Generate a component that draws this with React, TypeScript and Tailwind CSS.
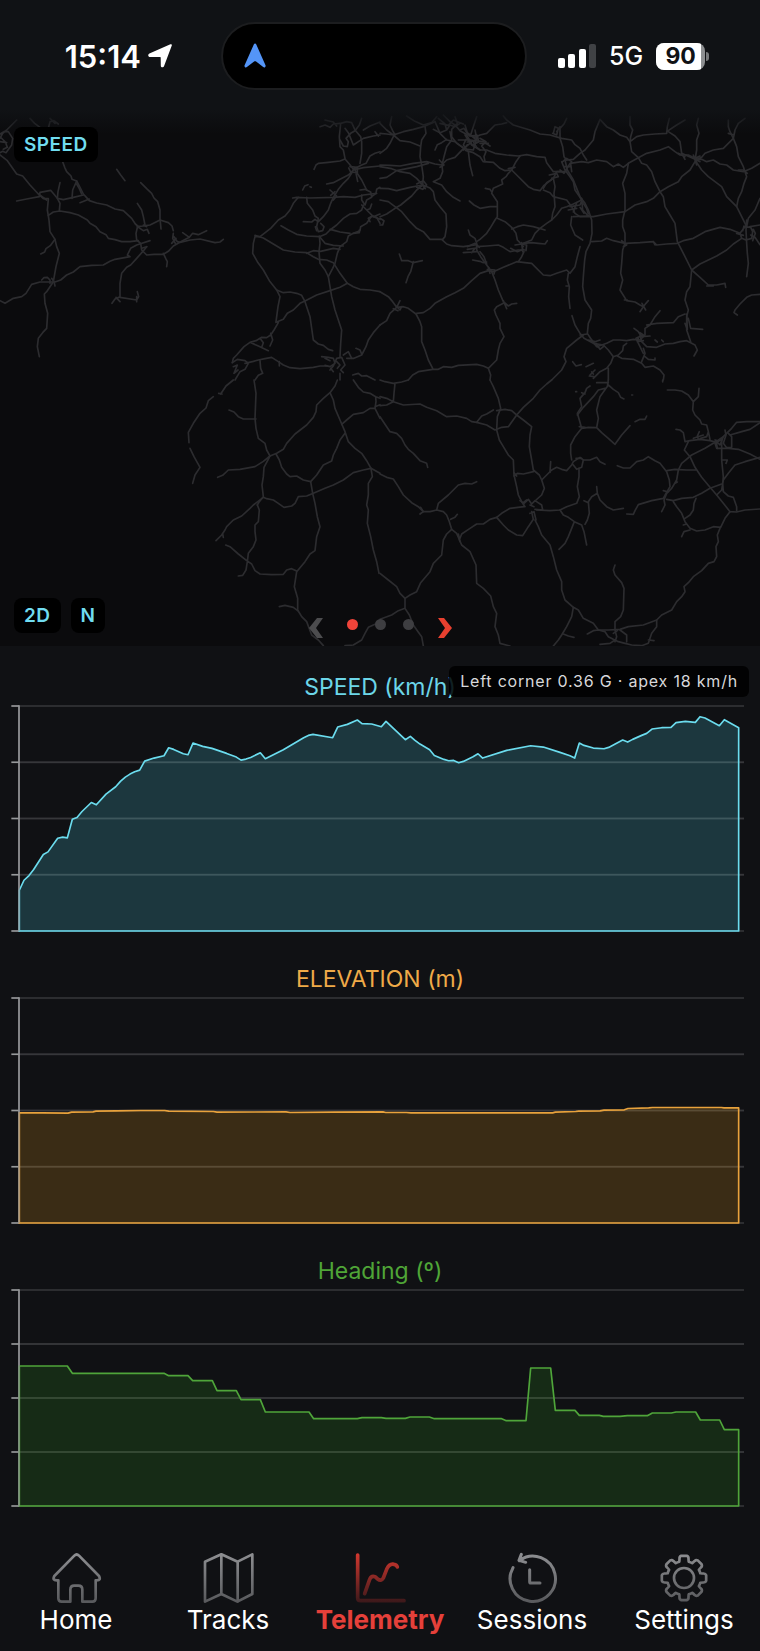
import type { ReactNode } from 'react';

const ROADS_NORTH_WEST = [
  'M0 135 22 152 50 192 68 198 90 225 115 252 140 270',
  'M50 30 38 42 20 60 8 70 0 85M0 72 14 64 25 65 38 85 35 105 18 128 8 124 0 128M0 95 20 98M4 84 16 96 22 112 10 118',
  'M90 25 104 40 120 52M150 25 165 40M145 55 150 35 162 32 175 42',
  'M188 155 194 172 200 185 213 198 216 208 230 213 240 232 250 252 268 272 290 279 320 285 345 297 370 302 395 325 406 342 413 348',
  'M50 273 80 267 118 260 120 247 152 241 172 265 190 269 220 262 250 255',
  'M180 218 174 245 172 265 180 280 178 302M230 213 218 240 216 265M230 222 238 236 245 252M240 278 268 267M118 255 130 266 145 266',
  'M145 268 142 300 147 330 150 365 165 388 170 410 178 430 168 470 160 515 140 545 133 552 135 580 143 610 140 655 128 668 115 685 112 710 118 740',
  'M145 316 160 306 180 303 210 308 235 315 262 330 270 340 288 350 300 365 318 374 325 385 345 389 365 395 390 395 415 392',
  'M122 432 134 426 138 416 152 406 165 388',
  'M0 572 15 580 25 574 40 565 65 560 78 550 95 523 120 516 165 516 182 510 200 495 220 486 240 470 275 466 310 465 330 454 345 448 390 440 382 435 392 415 410 405 450 392',
  'M125 510 132 503 142 502 150 510 150 520M155 505 162 515 165 528',
  'M422 218 440 236 455 250 462 264 473 275 480 300 480 325 483 357',
  'M412 280 425 300 430 320 435 345M350 178 362 195 375 212',
  'M413 348 408 370 410 390 422 400 425 420 440 435 462 433 490 433 505 424 520 408 545 394 568 382 578 370 595 374 620 362',
  'M413 350 450 345 480 330 505 338 516 348 520 362M412 350 430 362 442 358 447 370M430 345 440 350M425 415 440 410',
  'M520 370 518 385 526 400M522 380 532 395 540 397 570 390 600 387 645 398 660 396 670 388M548 368 568 382M528 385 515 400',
  'M490 430 497 445 502 455 500 470M440 410 428 425 410 445 392 465 380 472 365 490 360 520 360 562 410 570 416 560 412 545M410 575 410 560M360 560 345 567 336 580M348 562 360 575',
  'M878 264 890 262 930 264 1000 262 1030 260 1065 262 1090 255 1130 250M908 240 914 228 924 224M930 230 934 232',
  'M895 262 880 280 870 300 855 318 835 330 812 355 780 380 765 380 760 400 758 430 772 455 790 480 808 512 830 540 840 560 834 590 828 635 835 638 822 660 812 675',
  'M765 376 790 384 820 402 850 420 885 426 920 428 940 440 955 448 980 450 1000 458 1020 490 1042 520 1060 530 1080 538 1110 540 1140 545',
  'M830 540 850 548 870 546 890 550 905 556 915 575 930 620 940 690 955 702 970 706 985 718 998 722',
  'M828 637 850 628 862 610 880 600 900 580 915 573 950 555 990 542 1020 532 1042 520',
  'M920 262 922 280 938 300 945 318 955 325M910 335 935 336 945 328 950 332M955 325 950 350 955 365 968 362 972 350 962 340',
  'M843 347 865 360 890 373 920 378 958 380 978 372 990 360 1010 345 1030 325 1050 312 1070 310 1085 300 1090 285',
  'M958 378 960 400 957 425 960 460 975 480 985 500 990 530 995 560 1005 600 1015 630 1025 660 1022 700 1020 740',
  'M985 500 998 475 1005 460 1012 430 1020 410 1040 395 1045 378 1060 370 1080 362 1082 350 1100 340 1115 318 1140 328',
  'M920 430 940 422 962 424 1000 415 1020 418M960 382 975 400 1000 406 1030 408M1050 370 1020 366 1005 362 990 358',
  'M1058 185 1045 205 1030 220 1015 238 1000 262 992 280 985 300 970 320 955 335M980 222 1000 218 1020 208 1045 195 1060 180',
  'M942 178 948 165 955 160 985 157 1020 153 1035 147 1048 162 1060 178 1085 165 1098 160 1110 138 1125 130 1140 125M1060 180 1090 173 1140 168M1065 180 1085 210 1100 240',
  'M1035 145 1030 120 1020 110 1018 80 1022 40 1040 35 1055 38 1065 60 1082 80 1085 95 1085 130 1080 160',
  'M1020 90 1030 108 1042 110 1045 95 1038 85 1052 70 1065 62 1078 45 1085 25M1035 55 1045 68 1060 105 1090 85 1120 78 1140 75M960 50 975 45 990 52 1000 42 1020 40M975 30 1000 36 1010 48M1090 60 1110 48 1140 36M1125 65 1135 78',
  'M1050 170 1072 172 1072 188 1052 186 1046 174M1080 240 1095 238 1112 246 1115 262 1100 270 1095 285 1085 270 1085 255M1085 285 1100 300 1110 296 1115 282M1115 260 1128 250 1130 238 1140 232M1100 300 1120 320 1140 312M1068 190 1073 214',
  'M1110 335 1105 325 1118 318 1130 322 1140 340M1060 370 1078 368 1078 360M990 240 1010 258 1000 270M1005 245 992 256M950 362 946 350',
  'M812 675 800 683 785 682 768 692 750 697 732 710 710 735 700 745 697 758M750 697 775 708 805 722M780 685 790 698 785 712M812 670 818 690 810 708',
  'M697 758 712 748 735 752 745 760 735 778 720 785 705 810M700 770 712 765 702 790 714 780M735 760 760 754 775 750 795 746 815 742 835 755 850 765 870 773 900 776 940 772 960 768 980 768',
  'M780 752 782 775 788 790 775 796 765 810M838 755 838 768M1140 645 1120 668 1105 690 1098 710 1085 735 1062 745 1040 745M1068 715 1080 720 1085 732',
  'M965 740 985 742 1000 745 1005 760 990 770 975 766M990 780 1000 768 1010 745 1025 742 1035 765 1022 780 1030 788M1030 735 1045 725 1055 745M1000 785 992 775M1020 790 1020 810M1010 755 1020 765 1012 775M1058 795 1075 790 1085 798 1100 797 1125 810M975 745 990 752',
];

const ROADS_NORTH_EAST = [
  'M0 40 20 60 40 75 70 65 100 58 130 50 165 35M0 70 20 72 40 75 60 92 90 96 120 108M0 130 20 115 30 100 40 80M35 20 30 45 38 62 45 75',
  'M80 18 105 34 130 45 155 38 170 20M135 50 138 70 125 90 122 110 120 140 125 165 130 200 128 225',
  'M0 165 30 166 60 168 100 160 140 155 165 162 185 165 200 150 225 142 248 118 270 100M0 205 20 202 50 182 80 176 110 170 145 160M0 170 35 176 60 185 90 190 110 205 128 225M0 235 25 236 50 242 90 232 128 225 110 240 95 258 80 270 62 285 45 295 20 312 0 320',
  'M0 270 25 275 45 290 65 305 90 335 110 355 130 365 150 388 185 388 200 402 215 407 250 410 290 404M0 325 12 332 8 345 0 345',
  'M128 225 150 234 160 245 165 270 180 290 198 312 200 350 195 380 188 388M110 222 130 212 140 225 128 238 110 232M120 216 136 236',
  'M160 215 180 205 188 185 186 165 192 140 200 110 215 90 210 65M160 215 185 225 200 245 220 262 240 273M178 150 192 165 180 172',
  'M165 35 180 70 200 90 225 95 245 110 258 122 280 128 300 140 310 155 340 157 360 175 375 182 395 180',
  'M165 120 172 104 185 98 200 88M160 58 180 68 200 60 210 45 225 50 240 40M180 40 205 46 220 30 250 42M190 15 210 35 225 45 240 62 258 72 275 100M175 25 195 42 200 60M225 20 232 40 215 58 215 80 230 100 248 112',
  'M240 60 252 55 265 75 285 82 300 75 320 70 345 45 365 42 380 38M290 20 280 50 272 75M255 45 262 68 290 90M258 88 250 105 265 125 270 165 278 197M235 90 270 90 310 95 330 108M280 95 290 112 300 120 320 120 345 130 380 135 415 138 440 134 470 140 495 142 500 158 520 185 545 185',
  'M300 85 318 95 305 108 318 125 312 140 315 155M285 60 290 85 280 120 262 118M255 75 275 105 300 120M268 78 292 76 296 96 278 104M262 96 285 92M300 100 325 100M250 120 262 104',
  'M370 18 380 30 400 45 450 60 480 72 510 75 545 85 575 90 585 104 600 115 610 135 620 150M420 138 408 155 395 180 385 190 378 200 365 210 368 222 340 235 335 250 352 275 352 300 352 320 345 330 330 355 320 370 300 388 290 395',
  'M316 235 330 238 335 245M268 273 282 285 300 295 330 290 352 290M395 180 410 195 430 215 445 230 460 238 480 242 492 226 520 205M385 176 405 172',
  'M352 325 375 335 395 352 408 370 412 390 422 400 430 410M395 357 412 350 430 345 460 350 495 360',
  'M265 360 270 375 285 385 290 400 290 420 302 440 320 465 335 485 345 510 355 540 370 575M370 575 385 588 395 582 410 580M370 572 380 596M370 580 350 590 343 600 348 615 360 640 360 655 372 680 360 700 355 720 350 750 325 775 332 795 330 810',
  'M290 410 320 408 355 405 370 412 390 425 415 420 435 420M430 400 455 390 465 370 480 355 500 340 515 330 530 315 545 295 560 290 580 282 605 270',
  'M250 428 290 425M262 410 285 400 298 412M262 418 290 414M430 400 455 398 475 400 495 402 502 392M405 405 425 402 440 405 438 422M392 415 412 425 430 418M425 398 428 425M432 425 425 440 415 455M275 428 285 415',
  'M110 610 130 608 150 595 165 580 200 560 225 548 250 535 275 512 300 490 325 482 340 485 370 472 410 455 435 458 455 460 470 475 490 495 510 497 530 490 560 480 570 490 585 470 592 440 600 410',
  'M565 490 562 510 568 530 566 560 570 595M558 528 566 528M278 450 300 454 310 458 320 456M322 478 345 480 342 492M326 472 330 490M300 425 312 440 320 462',
  'M58 432 65 452 85 452 100 458 127 452M100 455 92 485 84 500 78 518M0 545 25 560 38 575 50 592 70 590 85 595 108 612 120 635 125 650 125 695 135 720 145 750 158 775M0 645 20 632 30 610 50 592 60 572M45 585 60 600 65 590M40 596 54 602',
  'M85 810 98 795 115 785 158 778 175 778 190 770 215 772 235 766 290 763 310 768 325 775',
  'M560 25 552 42 540 55 540 85 548 110 552 140 560 150M520 70 525 50 535 55 530 75 518 70M540 50 530 65',
  'M555 150 562 180 580 210 590 235 600 260 615 280 625 300 635 330 636 370 630 400 618 425 614 450 610 500 608 530 615 570 635 600 632 625 625 640 622 670 635 690',
  'M545 155 555 180 570 200 580 215 585 240 600 262 610 280 620 296 625 312M572 160 575 185M548 155 560 145 575 155 570 170 552 170M540 180 552 190 560 178M508 195 530 190 535 200 515 205',
  'M490 235 500 218 520 205 530 185 555 185 570 160 605 155 625 158 650 150 680 155 700 170 715 162 730 172 745 160 775 143 800 130 840 120 865 110 885 125 900 135 925 135 945 145',
  'M520 205 525 230 522 250 525 290 518 310 515 330M490 240 510 248 520 260 560 270 575 290 585 310 600 320 640 320 680 312 735 305 765 285 800 275 820 265 840 245 865 230 895 215 905 200 930 180 945 155',
  'M570 290 600 285 606 270M565 300 590 295M580 320 630 318M575 320 572 345 585 375 608 390M605 265 608 300 625 318M590 278 580 306M600 292 612 310',
  'M560 150 580 148 600 130 615 120 640 90 645 65 660 28 680 50 700 60 720 75 740 82 750 95 755 125 775 143 785 160 800 165 815 185 825 215 840 245 850 260 855 290 870 315 885 340 892 395 910 430 935 480 930 530 920 545 915 570 925 600 920 620 920 660 932 695',
  'M750 20 750 45 758 60 752 80 750 95 770 80 790 75 825 72 860 70 862 50 868 25M860 65 890 45 915 30M865 65 885 78 900 95 905 130 915 148M895 130 915 140',
  'M745 160 740 190 728 220 735 250 735 300 728 330 728 350 735 370 735 400 728 420 725 460 722 490 728 510 720 540 740 572 765 576 780 585 790 590 798 580 805 572M790 590 780 605M786 580 797 600M733 570 742 570',
  'M635 395 665 393 680 385 700 392 735 400 780 398 820 395 830 405 860 402 892 400 910 392 940 385 975 365 1020 352 1050 358 1080 370M820 395 825 405M725 392 740 405 730 410',
  'M955 25 950 45 957 70 950 90 950 120 945 150 965 180 985 200 1025 230 1040 260 1070 290 1085 320 1100 350M905 130 945 148 965 148 980 155 1000 150 1020 162 1040 165 1060 180 1090 185 1115 175 1140 160M945 150 965 142 975 130 1000 120 1030 115 1045 100 1060 85 1050 65 1045 50 1045 30M930 140 960 155M940 135 950 165M945 145 960 138',
  'M1095 25 1075 40 1065 60 1060 85 1070 110 1075 140 1090 170 1100 200 1092 220 1085 245 1075 265 1070 290M1045 70 1062 75 1065 62M1075 180 1090 180 1102 190',
  'M1100 350 1105 325 1125 300 1140 265M1080 370 1085 385 1098 390 1115 385 1118 365 1112 352 1095 350 1080 370M1100 330 1098 360 1100 400 1102 430 1105 460 1100 500M1110 350 1140 345M1112 375 1125 382 1140 404M1120 358 1126 370 1118 392M1070 370 1090 376M1092 348 1088 362',
  'M1085 385 1060 402 1040 420 1010 438 985 450 960 462 935 480 960 502 985 525 1010 525 1035 520 1037 532M980 528 1000 528M1140 553 1115 555 1100 562 1080 582 1065 600 1062 608 1072 615',
  'M576 617 585 645 600 670 612 685 640 700 670 705 685 720 700 740M610 675 590 690 560 715 552 740 558 755 545 780 530 795 515 810M600 675 622 672M625 690 645 695 660 690',
  'M635 690 650 710 680 700 700 690 720 690 740 692 760 688 780 690 795 675 795 655 810 645 825 620 840 602M800 645 830 640 880 638 895 620 915 612M915 640 922 658 920 612M925 625 932 655 968 658',
  'M762 655 775 665 785 680 810 678M768 685 790 675 780 668M780 675 785 695 800 710 830 712 855 702 880 700 900 695 920 692 932 698 945 705 952 720 942 738M770 690 780 710 790 730M775 684 772 695 790 692',
  'M700 740 715 735 728 722 730 708 740 700M712 738 725 745 760 748 785 760 795 772 820 768 840 780 852 795 850 810M790 715 795 730 785 755M795 740 805 748 825 750 825 744M700 740 692 760 680 775 660 785 640 805M685 775 685 810',
  'M578 755 588 768 604 764M618 770 640 760M630 795 645 780M648 700 660 718 672 708M640 698 655 712M825 690 832 696M845 690 850 695M628 798 642 800M635 786 640 792',
];

const ROADS_SOUTH_WEST = [
  'M700 0 678 18 662 42M656 40 666 42M640 50 625 62 618 84 600 100 580 130 565 157 567 188M570 205 582 230 600 262 585 285 578 310',
  'M762 0 768 40 765 115 768 145 775 175 795 190 800 210 810 228 792 262 790 290 786 315 790 350 778 365 772 375',
  'M687 90 702 96 715 110 730 117 768 117M653 292 668 286 685 270 720 268 765 260 790 244 810 228 830 220 850 208 860 190 885 162 920 135 940 112 948 95 950 75 970 55 990 38 1005 18 1012 0',
  'M990 38 1000 60 1005 85 1020 120 1035 155 1045 185 1065 205 1085 220 1100 242 1113 265 1140 280',
  'M828 222 838 240 845 262 860 282 870 290 890 288 910 300 932 305 950 285 970 255 995 243 1000 225 1010 205 1020 180 1035 160',
  'M1025 133 1040 120 1060 103 1090 98 1110 85 1125 85 1128 65 1127 50 1110 40 1090 36 1075 22 1060 0M1125 85 1140 115M1127 50 1140 55M1125 80 1140 74',
  'M932 305 938 340 945 370 952 410 960 440 950 470 945 512 930 522 915 545 890 575 883 620 893 655 893 690 905 710 920 725 935 765 955 780 970 797',
  'M1113 265 1090 270 1060 278 1030 300 1000 315 975 325 940 340 920 348 895 350 885 370 875 378 852 382 835 370 820 360 800 356 790 352 760 375 750 385 725 408 700 420 680 440 675 450 665 465 648 482M670 472 668 462',
  'M772 375 778 390 775 425 765 435 765 455 768 480 760 500 745 520 742 545 738 570 728 586 715 588M677 495 690 500 715 522 740 542 755 552 765 572 780 582 815 584 850 583 860 570 875 566 890 573',
  'M1113 265 1117 290 1105 310 1105 345 1100 375 1105 390 1102 430 1112 470 1120 510 1130 545 1137 580M838 680 855 676 880 682 893 692M1140 730 1125 733 1105 742 1095 760 1085 780 1060 795 1035 797',
];

const ROADS_SOUTH_EAST = [
  'M0 0 15 5 40 10 65 6 85 0M45 10 42 40 40 65 20 75 0 77M0 50 20 55 40 65 70 75 120 72 140 82 170 92 200 110 230 108 260 115 275 125 290 127 320 135 345 150 365 142 385 140 410 105 395 92 375 88 350 92',
  'M290 127 305 108 320 102 340 90M330 0 340 20 355 55 362 85 352 110 350 150 358 180 370 200 385 225 400 240 402 285 410 320 415 345 425 365 435 380',
  'M410 105 430 82 460 55 480 30 500 12 515 0M410 105 430 120 455 140 450 165 448 200 455 240 460 270 478 285 485 300 493 325 485 345 468 360M402 288 412 280 430 282 460 275M402 278 410 288',
  'M0 110 20 140 30 155 50 160 65 175 75 195 85 208 100 220 120 242 140 250 143 262M0 282 20 292 40 297 55 320 70 345 95 368 115 380 130 395 150 395 170 390 190 395 200 405 208 425 215 448',
  'M170 390 175 370 205 345 235 315 255 310 275 312 290 305M212 418 225 412 232 403M130 395 120 402M122 382 130 395',
  'M0 580 25 600 50 620 60 640 75 655 90 645 110 635 122 608 150 575 160 550 185 525 190 480 200 462 215 448 230 460 245 495 270 515 288 555 290 610 310 625 332 648 340 680 350 700 345 740 355 765 360 790 390 798',
  'M75 655 75 685 55 692 35 705 0 718M75 685 88 705 100 735 112 752 125 770 130 798M235 462 240 485M238 480 245 462 270 445 290 432 310 432 330 418 350 412 365 400 390 385 432 380',
  'M350 412 370 435 385 450 410 465 428 467 445 440 460 418 455 395M420 362 432 370 445 358 455 372 465 362 485 375 488 390 465 388M450 375 462 380M450 400 462 395 468 420M430 368 440 360',
  'M470 390 510 392 540 390 560 380 590 370 598 350 592 320 597 290 597 265M465 420 475 440 485 465 510 495 520 530 530 570 545 605 545 630 555 660 580 682 575 710 560 740 545 765 535 780 520 798M550 762 565 768 582 772',
  'M540 390 550 405 565 412 583 425 605 435 612 455 620 495M583 425 575 445 565 470 555 490 537 508M485 300 500 285 515 270 530 262 545 268 560 272 575 255 580 245 600 232 610 240 605 262 590 268 580 255',
  'M575 240 572 220 572 195 585 170 605 145 598 120 592 100 605 80 600 55 615 38 620 25 630 18M510 277 512 245M610 240 630 240 650 232 660 245 675 253M588 235 605 235M598 140 615 142',
  'M605 145 625 142 650 143 665 158 685 175 705 193 725 165 750 137M765 125 780 118 795 118 800 108M650 143 655 115 650 90 660 50 685 15 700 28 715 38 722 52 732 57M592 105 610 82 640 50 655 30 675 25M650 8 685 8M685 0 682 20M605 38 615 42',
  'M712 257 730 264 750 264 770 245 790 240 805 230 825 242 840 250 860 275 868 300 870 320 858 340 850 355 815 362 775 374 765 392 760 403 740 402M755 45 758 45M848 0 848 6M587 35 590 35',
  'M862 30 885 30 905 33 925 45 940 65 955 50 957 25M940 65 938 90 945 105 960 120 965 132 980 135 985 155 990 178M888 148 900 150 910 158 915 185 930 182 960 178 990 182 1010 187M958 155 952 168 955 178M985 155 980 170 960 176M940 175 970 165',
  'M925 185 913 210 930 230 945 262 965 292 990 322 1010 345 1030 370 1050 395 1070 396 1095 390 1140 387M860 272 885 268 920 270 950 270',
  'M1140 125 1100 125 1070 127 1055 145 1030 170 1000 190 975 205 935 225 905 250 895 270 890 300 875 325 860 340 852 360 855 375 845 395M860 358 880 362 905 355 940 352 965 340 990 325 1025 312M850 332 865 336M885 310 892 306',
  'M1025 175 1025 240 1030 290 1028 310 1030 335 1045 348 1060 352 1070 380 1070 393M1010 345 1025 330 1030 300 1045 280 1065 255 1095 245 1140 232M1140 238 1110 222 1075 208 1045 205 1010 205 1005 190 1025 178',
  'M1050 165 1085 155 1110 148 1140 128M1035 150 1038 165 1030 190 1040 203 1055 202 1055 170 1045 160M1025 240 1042 240 1038 250M1005 180 1020 195 1030 170M1012 205 1008 180',
  'M880 365 890 380 905 400 915 425 930 445 950 453 975 450 1000 440 1022 442 1035 415 1050 395M915 415 930 405 940 390 942 370 948 355M905 470 912 455 930 450M910 435 920 432M1022 440 1012 465 1015 485 1008 500 1010 530 1002 545 985 550 965 572 940 590 925 608 912 620 915 635 905 650 890 665 875 690 845 705 830 720 790 735 745 740 720 748 685 750 655 750 640 730 610 715 595 690 580 682',
  'M705 555 700 570 705 585 725 608 732 625 730 690 722 710 705 725 705 750 710 770 705 785M622 762 640 752 655 750 675 755 685 770 700 778 715 785 735 790 755 795 785 797 805 790 815 760 830 740 830 720M660 793 690 790 705 780M720 750 740 765 740 785M805 780 822 782M700 760 712 752',
  'M650 320 652 340 660 360 680 380 700 390 730 385M652 340 635 350 625 365 628 400 622 420 615 433M612 362 625 368',
];

const SPEED_LINE =
  '58,720 72,690 87,676 101,658 130,613 144,605 173,564 188,561 202,563 217,507 231,502 246,484 274,457 289,464 318,432 347,410 362,393 376,381 390,372 404,365 419,360 434,333 462,324 492,317 506,293 521,298 550,311 564,314 579,279 608,289 636,295 680,310 709,321 723,330 738,327 752,322 781,308 796,326 850,299 911,263 925,256 939,253 998,263 1013,231 1042,223 1072,210 1086,221 1115,222 1144,230 1158,214 1216,269 1231,259 1245,271 1260,282 1289,299 1303,316 1332,328 1346,332 1361,331 1376,338 1390,334 1419,320 1434,311 1448,324 1520,301 1592,287 1630,291 1680,307 1710,317 1724,324 1738,279 1752,286 1780,294 1812,296 1826,292 1868,270 1883,276 1898,268 1925,256 1940,250 1956,237 1985,233 2013,232 2028,218 2056,214 2086,217 2100,200 2115,204 2158,227 2173,209 2216,233';

const ELEVATION_LINE =
  '58,457 128,457 204,458 215,455 279,454 288,452 349,451 422,450 494,450 506,452 640,453 651,455 858,454 870,456 1003,455 1149,454 1157,456 1219,456 1233,457 1658,457 1666,455 1727,453 1736,452 1800,451 1812,449 1873,448 1884,444 1946,442 1957,441 2164,441 2172,442 2216,442';

const HEADING_LINE =
  '58,347 202,347 217,369 492,369 506,376 564,376 578,391 637,391 651,421 709,421 723,448 781,448 796,485 927,485 941,505 1072,505 1086,502 1144,502 1158,504 1216,504 1230,500 1288,500 1303,505 1505,505 1519,511 1578,511 1592,353 1652,353 1666,480 1725,480 1738,495 1798,495 1810,498 1860,498 1882,496 1942,496 1957,488 2014,488 2028,485 2087,485 2101,509 2159,509 2173,538 2216,538';

function StatusBar() {
  return (
    <header className="grid h-[110px] grid-cols-[1fr_auto_1fr] items-start bg-[#101215] pt-[22px] pr-3">
      <div className="flex h-[68px] items-center justify-end gap-[7px] pr-[49px]">
        <time className="text-[31px] leading-none font-semibold text-white">15:14</time>
        <svg viewBox="0 0 24 24" className="size-6" aria-hidden="true">
          <path
            d="M22.4.3c1-.4 1.700.4 1.400 1.300L16 22.200c-.6 1.700-3.200 1.500-3.200-.5l-.1-8.200c0-.4-.2-.6-.6-.6L2.200 13C0 13-.5 10.300 1.400 9.500z"
            fill="#fff"
          />
        </svg>
      </div>
      <div className="flex h-[68px] w-[306px] items-center rounded-full border-2 border-[#1c1d1f] bg-black pl-5">
        <svg viewBox="0 0 24 26" className="h-[26px] w-6" aria-hidden="true">
          <path
            d="M10.800 1.600c.5-1.400 2-1.400 2.500 0l9.200 20.600c.6 1.600-.9 2.900-2.300 1.900l-7.100-5.600c-.6-.5-1.400-.5-2 0l-7.200 5.600c-1.400 1-2.900-.3-2.300-1.900z"
            fill="#5495f7"
          />
        </svg>
      </div>
      <div className="flex h-[68px] items-center gap-[13px] pl-[31px]">
        <svg viewBox="0 0 38 24" className="h-6 w-[38px]" role="img" aria-label="Signal">
          <rect x="0" y="14" width="7" height="10" rx="2" fill="#fff" />
          <rect x="10" y="10" width="7" height="14" rx="2" fill="#fff" />
          <rect x="21" y="5" width="7" height="19" rx="2" fill="#fff" />
          <rect x="31" y="0" width="7" height="24" rx="2" fill="#404245" />
        </svg>
        <span className="text-[25px] leading-none font-medium text-white">5G</span>
        <div className="flex items-center gap-px">
          <div className="flex h-[27px] w-[49px] items-center overflow-hidden rounded-lg bg-[#8d8f91]">
            <span className="flex h-full w-[45px] items-center justify-center bg-white pl-1 text-[23px] leading-none font-bold text-[#101215]">
              90
            </span>
          </div>
          <span className="h-[9px] w-[3px] rounded-r-full bg-[#77797b]" />
        </div>
      </div>
    </header>
  );
}

function Roads({ x, y, paths }: { x: number; y: number; paths: string[] }) {
  return (
    <g transform={`translate(${x} ${y})`}>
      {paths.map((d) => (
        <path key={d} d={d} />
      ))}
    </g>
  );
}

function MapBadge({ children }: { children: ReactNode }) {
  return (
    <button
      type="button"
      className="h-[35px] rounded-lg bg-black px-[10px] text-[19px] leading-none font-semibold tracking-wide text-[#70dcf0]"
    >
      {children}
    </button>
  );
}

function TrackMap() {
  return (
    <section aria-label="Map" className="relative h-[536px] overflow-hidden bg-[#0b0b0d]">
      <svg
        viewBox="0 0 2280 1608"
        preserveAspectRatio="xMidYMid slice"
        className="size-full"
        fill="none"
        stroke="#2c2c2f"
        strokeWidth="5"
        strokeLinejoin="round"
        strokeLinecap="round"
        aria-hidden="true"
      >
        <Roads x={0} y={0} paths={ROADS_NORTH_WEST} />
        <Roads x={1140} y={0} paths={ROADS_NORTH_EAST} />
        <Roads x={0} y={810} paths={ROADS_SOUTH_WEST} />
        <Roads x={1140} y={810} paths={ROADS_SOUTH_EAST} />
      </svg>
      <div className="absolute inset-x-0 top-0 h-6 bg-linear-to-b from-[#101215] to-transparent" />
      <div className="absolute top-[17px] left-[14px]">
        <MapBadge>SPEED</MapBadge>
      </div>
      <div className="absolute bottom-[13px] left-[14px] flex gap-[10px]">
        <MapBadge>2D</MapBadge>
        <MapBadge>N</MapBadge>
      </div>
      <div className="absolute inset-x-0 bottom-1 flex items-center justify-center gap-5">
        <button type="button" aria-label="Previous" className="p-1">
          <svg viewBox="0 0 14 20" className="h-5 w-[14px]">
            <path d="M8 0h6L7 10l7 10H8L0 10z" fill="#4c4c4e" />
          </svg>
        </button>
        <div className="mb-[7px] flex gap-[17px]">
          <span className="size-[11px] rounded-full bg-[#f0443a]" />
          <span className="size-[11px] rounded-full bg-[#3e3e41]" />
          <span className="size-[11px] rounded-full bg-[#3e3e41]" />
        </div>
        <button type="button" aria-label="Next" className="p-1">
          <svg viewBox="0 0 14 20" className="h-5 w-[14px]">
            <path d="M6 0H0L7 10 0 20h6L14 10z" fill="#e8402f" />
          </svg>
        </button>
      </div>
    </section>
  );
}

type ChartProps = {
  title: string;
  line: string;
  top: number;
  range: number;
  stroke: string;
  fill: string;
  titleClass: string;
  sizeClass: string;
};

function Chart({ title, line, top, range, stroke, fill, titleClass, sizeClass }: ChartProps) {
  const rows = [0, 1, 2, 3, 4].map((i) => top + (range * i) / 4);
  const bottom = top + range;
  return (
    <figure>
      <figcaption className={`h-[34px] text-center text-[23px] leading-[37px] ${titleClass}`}>{title}</figcaption>
      <svg
        viewBox={`0 ${top - 9} 2280 ${range + 21}`}
        preserveAspectRatio="none"
        className={`block w-full ${sizeClass}`}
        fill="none"
        role="img"
        aria-label={title}
      >
        {rows.map((y) => (
          <path key={y} d={`M58 ${y}H2232`} stroke="#2c2d30" strokeWidth="6" />
        ))}
        <polygon points={`${line} 2216,${bottom} 58,${bottom}`} fill={fill} fillOpacity="0.2" />
        {rows.slice(1, 4).map((y) => (
          <path key={y} d={`M58 ${y}H2232`} stroke="#fff" strokeOpacity="0.05" strokeWidth="5" />
        ))}
        <path d={`M57 ${top - 2}V${bottom + 2}`} stroke="#85878a" strokeWidth="5" />
        {rows.map((y) => (
          <path key={y} d={`M34 ${y}H58`} stroke="#97999b" strokeWidth="5" />
        ))}
        <polygon
          points={`${line} 2216,${bottom} 58,${bottom}`}
          stroke={stroke}
          strokeWidth="5"
          strokeLinejoin="round"
        />
        <path d={`M57 ${top}V${bottom}`} stroke="#909294" strokeOpacity="0.7" strokeWidth="5" />
      </svg>
    </figure>
  );
}

const gearPoint = (radius: number, degrees: number) => {
  const a = (degrees * Math.PI) / 180;
  return `${(912 + radius * Math.sin(a)).toFixed(1)} ${(145 - radius * Math.cos(a)).toFixed(1)}`;
};

const GEAR_PATH =
  [0, 45, 90, 135, 180, 225, 270, 315]
    .map(
      (a, i) =>
        `${i === 0 ? 'M' : 'A51 51 0 0 1 '}${gearPoint(51, a - 16)}` +
        `Q${gearPoint(56, a - 14)} ${gearPoint(60, a - 13)}Q${gearPoint(66, a - 12)} ${gearPoint(67, a - 7)}` +
        `L${gearPoint(67, a + 7)}Q${gearPoint(66, a + 12)} ${gearPoint(60, a + 13)}Q${gearPoint(56, a + 14)} ${gearPoint(51, a + 16)}`,
    )
    .join('') + 'A51 51 0 0 1 ' + gearPoint(51, -16) + 'Z';

const TABS = [
  {
    label: 'Home',
    box: '150 67 156 156',
    shape: (
      <path d="M223 78q7-7 14 0l60 61q7 13-7 13h-3v54q0 10-10 10h-30v-36q0-12-12-12h-12q-12 0-12 12v36h-26q-10 0-10-10v-54h-5q-14 0-7-13z" />
    ),
  },
  {
    label: 'Tracks',
    box: '606 67 156 156',
    shape: <path d="M615 96 664 74l49 22 44-22v119l-45 23-48-23-49 23zM664 74v119M713 96v120" />,
  },
  {
    label: 'Telemetry',
    box: '1062 67 156 156',
    active: true,
    shape: (
      <path
        d="M1073 76v128q0 9 9 9h130M1094 192l15-43q5-12 16-8l8 7q10 8 17-3l10-26q8-18 22-15 8 1 10 8"
        strokeWidth="11"
      />
    ),
  },
  {
    label: 'Sessions',
    box: '378 67 156 156',
    shape: (
      <path d="M399 114A68 68 0 1 0 420 91M424 74l-7 18 20 6M427 88l-9 5M449 120v36q0 4 4 4h27" strokeWidth="9" />
    ),
  },
  {
    label: 'Settings',
    box: '834 67 156 156',
    shape: (
      <>
        <path d={GEAR_PATH} />
        <circle cx="912" cy="145" r="30" />
      </>
    ),
  },
];

function TabBar() {
  return (
    <nav aria-label="Main" className="mt-[42px] grid grid-cols-5 pb-4">
      {TABS.map((tab) => (
        <a
          key={tab.label}
          href={`#${tab.label.toLowerCase()}`}
          aria-current={tab.active ? 'page' : undefined}
          className={`flex flex-col items-center text-[26px] leading-[32px] ${
            tab.active ? 'font-bold text-[#e5403a]' : 'text-white'
          }`}
        >
          <svg
            viewBox={tab.box}
            className="size-[52px]"
            fill="none"
            stroke={`url(#tint-${tab.label})`}
            strokeWidth="8"
            strokeLinecap="round"
            strokeLinejoin="round"
            aria-hidden="true"
          >
            <linearGradient id={`tint-${tab.label}`} gradientUnits="userSpaceOnUse" x1="0" y1="70" x2="0" y2="220">
              <stop stopColor={tab.active ? '#d5382f' : '#8e8f92'} />
              <stop offset="1" stopColor={tab.active ? '#3a181a' : '#58595c'} />
            </linearGradient>
            {tab.shape}
          </svg>
          {tab.label}
        </a>
      ))}
    </nav>
  );
}

export default function App() {
  return (
    <div className="min-h-screen bg-[#101114] font-[Inter,sans-serif]">
      <StatusBar />
      <TrackMap />
      <main className="relative flex flex-col gap-[26px] pt-[23px]">
        <Chart
          title="SPEED (km/h)"
          line={SPEED_LINE}
          top={168}
          range={674}
          stroke="#6bdcee"
          fill="#4fd0e8"
          titleClass="text-[#6cd6e8]"
          sizeClass="h-[232px]"
        />
        <Chart
          title="ELEVATION (m)"
          line={ELEVATION_LINE}
          top={113}
          range={674}
          stroke="#e8a23c"
          fill="#e69a1a"
          titleClass="text-[#efaa48]"
          sizeClass="h-[232px]"
        />
        <Chart
          title="Heading (º)"
          line={HEADING_LINE}
          top={119}
          range={648}
          stroke="#4fa53a"
          fill="#329620"
          titleClass="text-[#4fa537]"
          sizeClass="h-[223px]"
        />
        <p className="absolute top-5 right-[11px] rounded-md bg-black/85 px-[11px] text-[16px] leading-[31px] tracking-wider text-[#d8d8da]">
          Left corner 0.36 G · apex 18 km/h
        </p>
      </main>
      <TabBar />
    </div>
  );
}
